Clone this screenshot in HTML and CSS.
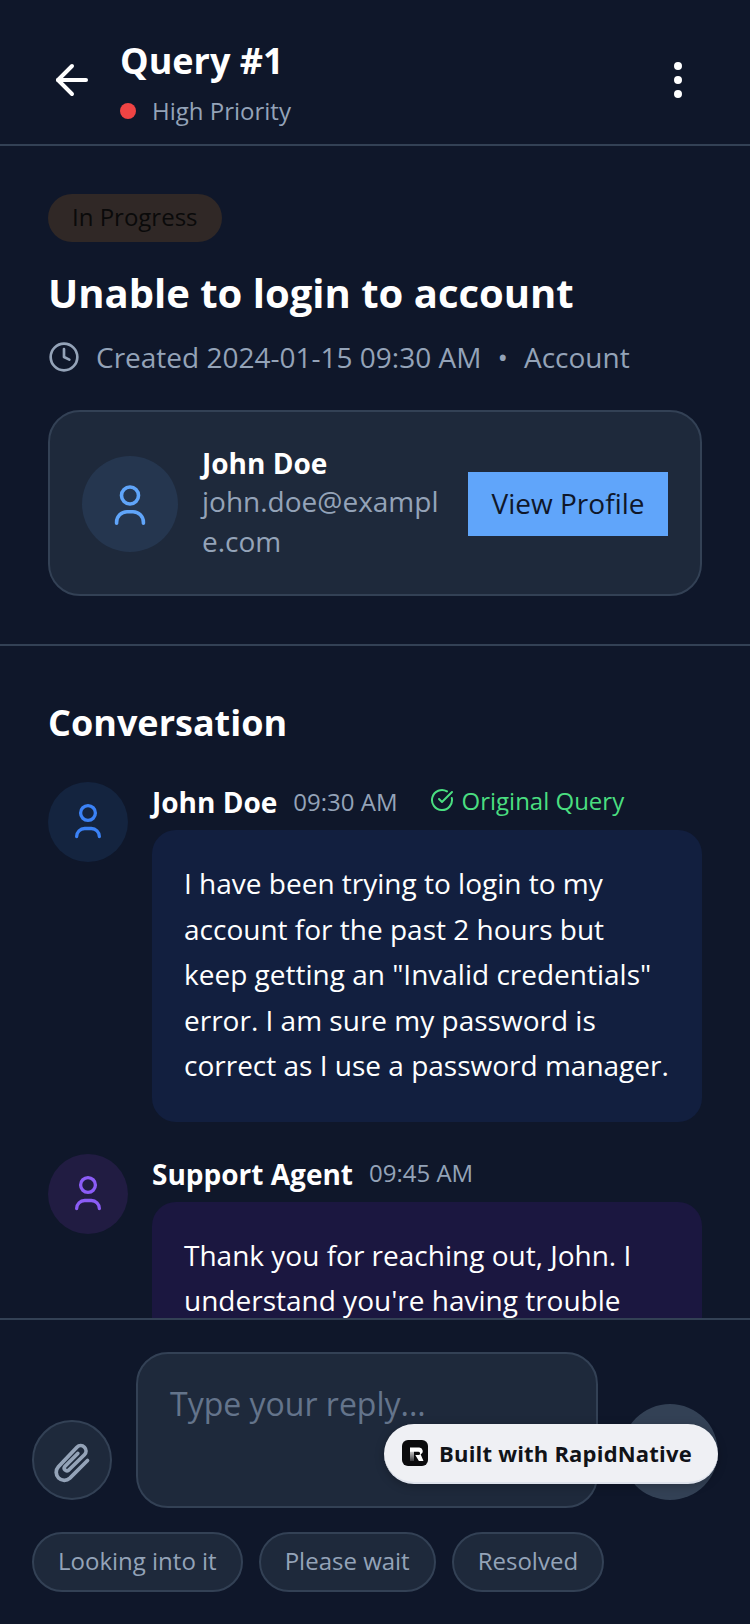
FILE: index.html
```html
<!DOCTYPE html>
<html lang="en">
<head>
  <meta charset="UTF-8">
  <meta name="viewport" content="width=device-width, initial-scale=1.0">
  <title>Query #1</title>
  <link rel="stylesheet" href="styles.css">
</head>
<body>
  <div class="screen">
    <header class="top-bar">
      <svg class="back-icon" viewBox="0 0 24 24"><path d="M19 12H5"/><path d="m12 19-7-7 7-7"/></svg>
      <div class="top-title">
        <h1>Query #1</h1>
        <div class="priority"><span class="priority-dot"></span><span>High Priority</span></div>
      </div>
      <svg class="more-icon" viewBox="0 0 24 24"><circle cx="12" cy="5" r="1"/><circle cx="12" cy="12" r="1"/><circle cx="12" cy="19" r="1"/></svg>
    </header>

    <main class="content">
      <section class="summary">
        <span class="status-badge">In Progress</span>
        <h2>Unable to login to account</h2>
        <div class="meta">
          <svg class="clock-icon" viewBox="0 0 24 24"><circle cx="12" cy="12" r="10"/><path d="M12 6v6l4 2"/></svg>
          <span>Created 2024-01-15 09:30 AM</span>
          <span class="meta-dot">•</span>
          <span>Account</span>
        </div>
        <div class="customer-card">
          <div class="customer-avatar">
            <svg class="user-icon" viewBox="0 0 40 44"><circle cx="20" cy="13.5" r="8.5"/><path d="M6.6 41.2v-1a10.4 10.4 0 0 1 10.4-10.4h6a10.4 10.4 0 0 1 10.4 10.4v1"/></svg>
          </div>
          <div class="customer-info">
            <div class="customer-name">John Doe</div>
            <div class="customer-email">john.doe@example.com</div>
          </div>
          <button class="profile-btn">View Profile</button>
        </div>
      </section>

      <section class="conversation">
        <h3>Conversation</h3>
        <div class="message">
          <div class="msg-avatar msg-avatar-user">
            <svg viewBox="0 0 36 40"><circle cx="18" cy="11" r="7.4"/><path d="M6.65 34.5a8 8 0 0 1 8-8h6.7a8 8 0 0 1 8 8"/></svg>
          </div>
          <div class="msg-body">
            <div class="msg-head">
              <span class="msg-name">John Doe</span>
              <span class="msg-time">09:30 AM</span>
              <span class="msg-original">
                <svg viewBox="0 0 24 24"><path d="M21.8 10A10 10 0 1 1 17 3.34"/><path d="m9 11 3 3L22 4"/></svg>
                Original Query
              </span>
            </div>
            <div class="bubble bubble-user">I have been trying to login to my account for the past 2 hours but keep getting an "Invalid credentials" error. I am sure my password is correct as I use a password manager.</div>
          </div>
        </div>
        <div class="message">
          <div class="msg-avatar msg-avatar-agent">
            <svg viewBox="0 0 36 40"><circle cx="18" cy="11" r="7.4"/><path d="M6.65 34.5a8 8 0 0 1 8-8h6.7a8 8 0 0 1 8 8"/></svg>
          </div>
          <div class="msg-body">
            <div class="msg-head">
              <span class="msg-name">Support Agent</span>
              <span class="msg-time">09:45 AM</span>
            </div>
            <div class="bubble bubble-agent">Thank you for reaching out, John. I understand you're having trouble logging in. Let me look into this for you right away.</div>
          </div>
        </div>
      </section>
    </main>

    <footer class="reply-bar">
      <div class="reply-row">
        <button class="attach-btn">
          <svg viewBox="-3 0 60 60"><path d="M44 30 24 50a9.2 9.2 0 0 1-13-13l21-22a6 6 0 0 1 8.5 8.5L22.500 41a3 3 0 0 1-4.200-4.200L33 22"/></svg>
        </button>
        <div class="reply-input">Type your reply...</div>
        <button class="send-btn"></button>
      </div>
      <div class="quick-replies">
        <span class="chip">Looking into it</span>
        <span class="chip">Please wait</span>
        <span class="chip">Resolved</span>
      </div>
    </footer>

    <div class="built-pill">
      <svg class="built-logo" viewBox="0 0 26 26">
        <defs>
          <linearGradient id="stem-fade" x1="0" y1="0" x2="0" y2="1">
            <stop offset="0" stop-color="#fff"/>
            <stop offset="1" stop-color="#3a3a3d"/>
          </linearGradient>
        </defs>
        <rect width="26" height="26" rx="6" fill="#0b0b0d"/>
        <rect x="8" y="8" width="4" height="13" fill="url(#stem-fade)"/>
        <path d="M8 7.5h9a3.5 3.5 0 0 1 1.6 6.7L21.500 21h-4.600l-3.600-6h3.200a1.200 1.200 0 0 0 0-3.200H8z" fill="#fff"/>
      </svg>
      <span>Built with RapidNative</span>
    </div>
  </div>
</body>
</html>
```

FILE: styles.css
```css
html, body {
  margin: 0;
  padding: 0;
  background-color: #0f172a;
}
body {
  font-family: "Open Sans", sans-serif;
  color: #fff;
}
h1, h2, h3 {
  margin: 0;
}
svg {
  fill: none;
  stroke-linecap: round;
  stroke-linejoin: round;
}
.screen {
  position: relative;
  display: flex;
  flex-direction: column;
  width: 750px;
  height: 1624px;
  overflow: hidden;
}

/* top bar */
.top-bar {
  flex: none;
  display: flex;
  align-items: flex-end;
  height: 146px;
  padding: 0 48px 15px;
  box-sizing: border-box;
  border-bottom: 2px solid #334155;
}
.back-icon {
  width: 48px;
  height: 48px;
  margin-bottom: 25px;
  stroke: #fff;
  stroke-width: 2;
}
.top-title {
  flex: 1;
  margin-left: 24px;
}
.top-title h1 {
  font-size: 36px;
  line-height: 48px;
  font-weight: 700;
}
.priority {
  display: flex;
  align-items: center;
  gap: 16px;
  margin-top: 8px;
  font-size: 24px;
  line-height: 36px;
  color: #94a3b8;
}
.priority-dot {
  width: 16px;
  height: 16px;
  border-radius: 50%;
  background-color: #ef4444;
}
.more-icon {
  width: 48px;
  height: 48px;
  margin-bottom: 25px;
  stroke: #fff;
  stroke-width: 2;
  fill: #fff;
}

.content {
  flex: 1;
  min-height: 0;
  overflow: hidden;
}

/* query summary */
.summary {
  padding: 48px;
  border-bottom: 2px solid #334155;
}
.status-badge {
  display: inline-block;
  padding: 5px 24px 7px;
  border-radius: 24px;
  font-size: 24px;
  line-height: 36px;
  color: #0a0a0a;
  background-color: #302826;
}
.summary h2 {
  margin-top: 23px;
  font-size: 40px;
  line-height: 56px;
  font-weight: 700;
}
.meta {
  display: flex;
  align-items: center;
  margin-top: 16px;
  font-size: 28px;
  line-height: 40px;
  color: #94a3b8;
}
.clock-icon {
  width: 32px;
  height: 32px;
  margin-right: 16px;
  stroke: #94a3b8;
  stroke-width: 2;
}
.meta-dot {
  margin: 0 16px;
}
.customer-card {
  display: flex;
  align-items: center;
  gap: 24px;
  margin-top: 33px;
  padding: 32px;
  border: 2px solid #334155;
  border-radius: 32px;
  background-color: #1e293b;
}
.customer-avatar {
  flex: none;
  display: flex;
  align-items: center;
  justify-content: center;
  width: 96px;
  height: 96px;
  margin-top: 2px;
  border-radius: 50%;
  background-color: #25364f;
}
.user-icon {
  width: 40px;
  height: 44px;
  stroke: #60a5fa;
  stroke-width: 3.6;
}
.customer-info {
  flex: 1;
  min-width: 0;
  min-height: 118px;
}
.customer-name {
  font-size: 28px;
  line-height: 38px;
  font-weight: 700;
}
.customer-email {
  font-size: 28px;
  line-height: 39.5px;
  color: #94a3b8;
  word-break: break-all;
}
.profile-btn {
  flex: none;
  width: 200px;
  height: 64px;
  margin-top: 2px;
  padding: 0 0 2px;
  border: none;
  font-family: inherit;
  font-size: 28px;
  color: #0f172a;
  background-color: #60a5fa;
}

/* conversation */
.conversation {
  padding: 49px 48px 48px;
}
.conversation h3 {
  font-size: 36px;
  line-height: 56px;
  font-weight: 700;
}
.message {
  display: flex;
  gap: 24px;
  margin-top: 32px;
}
.conversation h3 + .message {
  margin-top: 31px;
}
.msg-avatar {
  flex: none;
  display: flex;
  align-items: center;
  justify-content: center;
  width: 80px;
  height: 80px;
  border-radius: 50%;
}
.msg-avatar svg {
  width: 36px;
  height: 40px;
  stroke-width: 3.3;
}
.msg-avatar-user {
  background-color: #14243f;
}
.msg-avatar-user svg {
  stroke: #3b82f6;
}
.msg-avatar-agent {
  background-color: #211c42;
}
.msg-avatar-agent svg {
  stroke: #8b5cf6;
}
.msg-body {
  flex: 1;
  min-width: 0;
}
.msg-head {
  display: flex;
  align-items: center;
  gap: 16px;
  height: 40px;
  margin-bottom: 8px;
}
.msg-name {
  font-size: 28px;
  font-weight: 700;
}
.msg-time {
  margin-top: -2px;
  font-size: 24px;
  color: #94a3b8;
}
.msg-original {
  display: flex;
  align-items: center;
  gap: 8px;
  margin-top: -4px;
  margin-left: 16px;
  font-size: 24px;
  color: #4ade80;
}
.msg-original svg {
  width: 24px;
  height: 24px;
  stroke: #4ade80;
  stroke-width: 2;
}
.bubble {
  padding: 31px 32px 33px;
  border-radius: 24px;
  font-size: 28px;
  line-height: 45.5px;
}
.bubble-user {
  background-color: #121f3f;
}
.bubble-agent {
  background-color: #1b1740;
}

/* reply area */
.reply-bar {
  flex: none;
  position: relative;
  padding: 32px;
  border-top: 2px solid #334155;
  background-color: #0f172a;
}
.reply-row {
  display: flex;
  align-items: flex-end;
  gap: 24px;
}
.attach-btn {
  flex: none;
  display: flex;
  align-items: center;
  justify-content: center;
  width: 80px;
  height: 80px;
  margin-bottom: 8px;
  padding: 0;
  border: 2px solid #334155;
  border-radius: 50%;
  background-color: #1e293b;
}
.attach-btn svg {
  flex: none;
  width: 53px;
  height: 53px;
  stroke: #94a3b8;
  stroke-width: 4.2;
}
.reply-input {
  flex: 1;
  box-sizing: border-box;
  height: 156px;
  padding: 28px 32px;
  border: 2px solid #334155;
  border-radius: 32px;
  font-size: 32px;
  line-height: 44px;
  color: #64748b;
  background-color: #1e293b;
}
.send-btn {
  flex: none;
  width: 96px;
  height: 96px;
  margin-bottom: 8px;
  padding: 0;
  border: none;
  border-radius: 50%;
  background-color: #334155;
}
.quick-replies {
  display: flex;
  gap: 16px;
  margin-top: 24px;
}
.chip {
  box-sizing: border-box;
  height: 60px;
  padding: 0 24px;
  border: 2px solid #334155;
  border-radius: 30px;
  font-size: 24px;
  line-height: 54px;
  color: #94a3b8;
  background-color: #1e293b;
}

/* floating badge */
.built-pill {
  position: absolute;
  right: 32px;
  bottom: 140px;
  display: flex;
  align-items: center;
  gap: 11px;
  box-sizing: border-box;
  width: 334px;
  height: 60px;
  padding-left: 18px;
  border-bottom: 2px solid #dfe3ec;
  border-radius: 30px;
  font-size: 22px;
  letter-spacing: 0.2px;
  font-weight: 700;
  color: #111318;
  background-color: #eff0f4;
  box-shadow: 0 2px 10px rgba(0, 0, 0, 0.25);
}
.built-logo {
  flex: none;
  width: 26px;
  height: 26px;
}
```
